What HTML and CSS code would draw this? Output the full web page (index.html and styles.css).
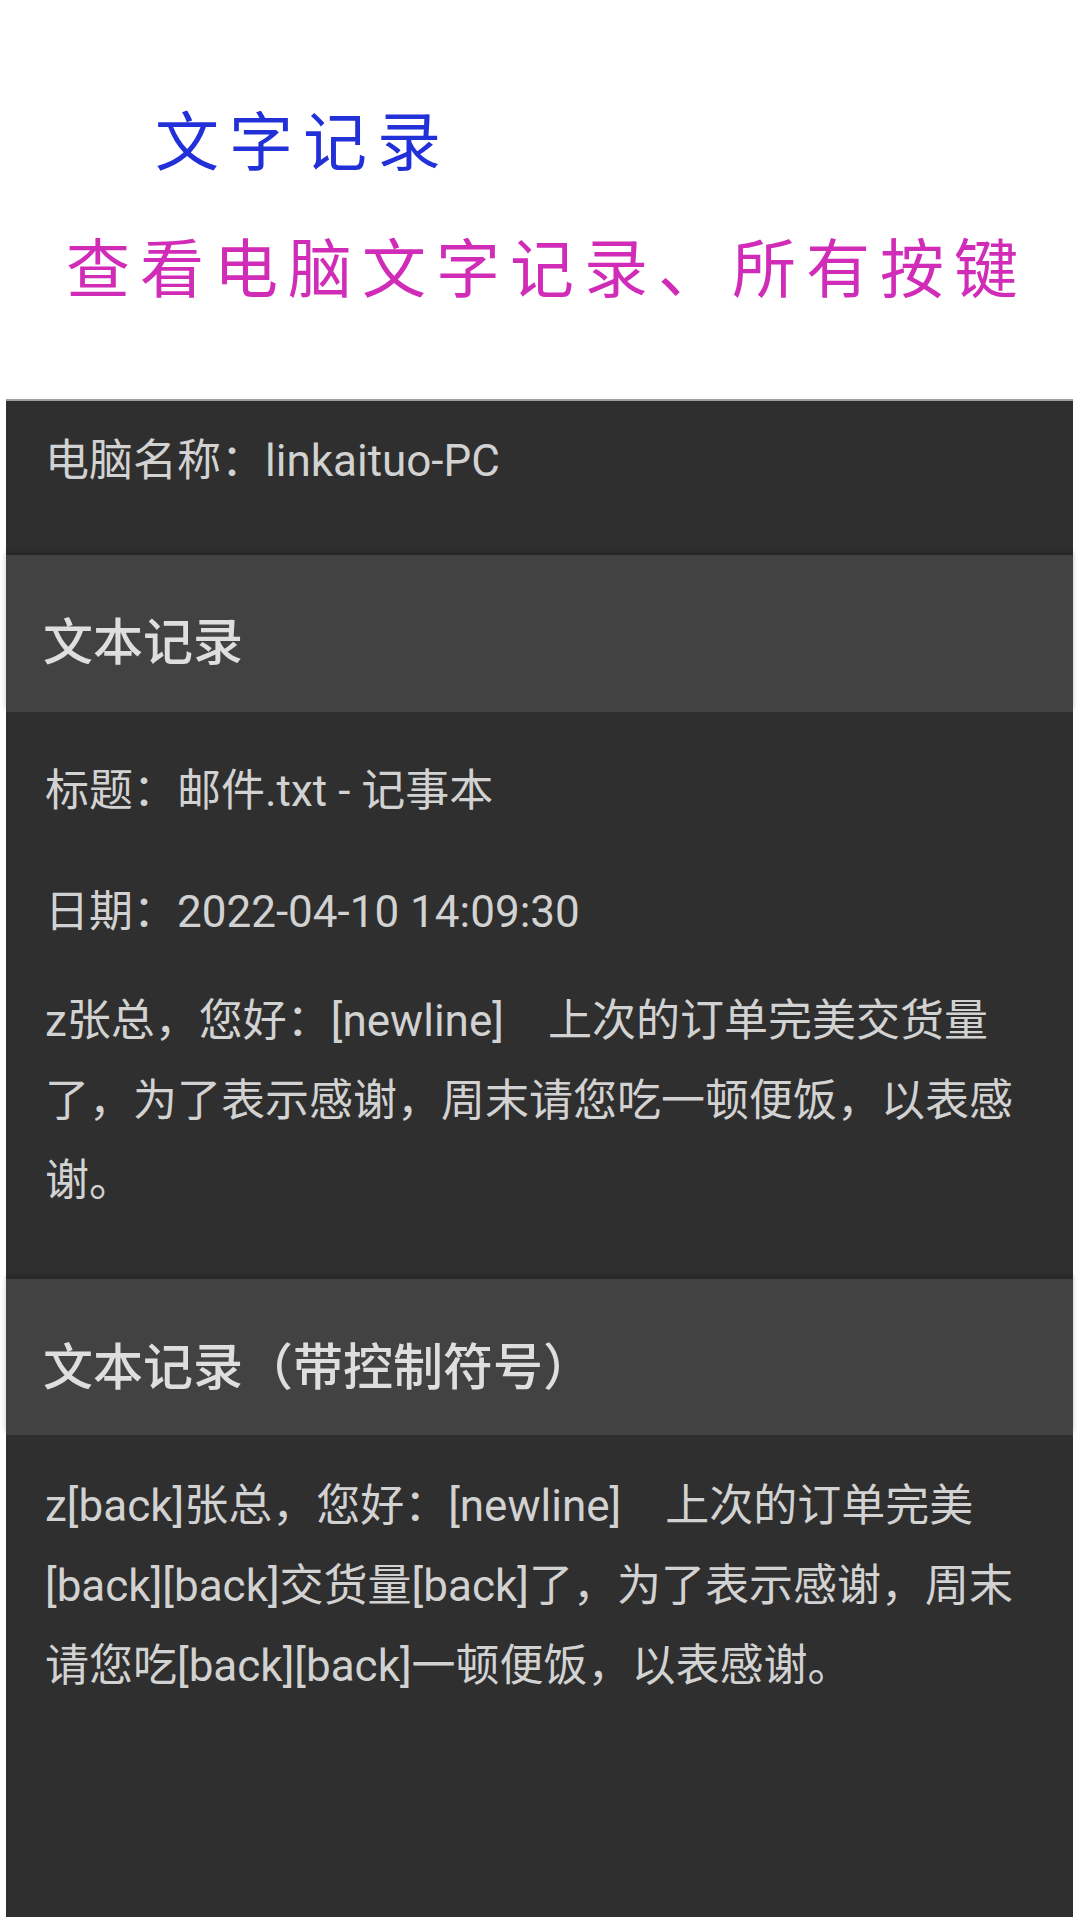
FILE: index.html
```html
<!DOCTYPE html>
<html lang="zh-CN">
<head>
<meta charset="utf-8">
<title>文字记录</title>
<link rel="stylesheet" href="styles.css">
</head>
<body>
<header class="hero">
  <h1 class="hero-title">文字记录</h1>
  <p class="hero-sub">查看电脑文字记录、所有按键</p>
</header>
<main class="panel">
  <div class="device">电脑名称：linkaituo-PC</div>
  <h2 class="section-head">文本记录</h2>
  <section class="section-body first">
    <p class="meta title">标题：邮件.txt - 记事本</p>
    <p class="meta date">日期：2022-04-10 14:09:30</p>
    <p class="text">z张总，您好：[newline]　上次的订单完美交货量了，为了表示感谢，周末请您吃一顿便饭，以表感谢。</p>
  </section>
  <h2 class="section-head second">文本记录（带控制符号）</h2>
  <section class="section-body last">
    <p class="text">z[back]张总，您好：[newline]　上次的订单完美[back][back]交货量[back]了，为了表示感谢，周末请您吃[back][back]一顿便饭，以表感谢。</p>
  </section>
</main>
</body>
</html>
```

FILE: styles.css
```css
html, body {
  margin: 0;
  padding: 0;
  background: #ffffff;
}
body {
  width: 1080px;
  height: 1920px;
  overflow: hidden;
  font-family: Roboto, "Noto Sans CJK SC", sans-serif;
}
.hero {
  height: 399px;
  box-sizing: border-box;
  padding: 97px 0 0 66px;
}
.hero-title {
  margin: 0 0 47px 89px;
  font-size: 64px;
  line-height: 80px;
  font-weight: 400;
  letter-spacing: 10px;
  color: #2230d8;
  font-family: "Noto Sans CJK SC", sans-serif;
}
.hero-sub {
  margin: 0;
  font-size: 64px;
  line-height: 80px;
  font-weight: 400;
  letter-spacing: 10px;
  color: #d02cb8;
  font-family: "Noto Sans CJK SC", sans-serif;
}
.panel {
  margin: 0 0 0 6px;
  width: 1067px;
  height: 1518px;
  box-sizing: border-box;
  background: #2f2f2f;
  border-top: 2px solid #9e9e9e;
  color: #d2d2d2;
  display: flex;
  flex-direction: column;
}
.device {
  height: 154px;
  box-sizing: border-box;
  padding: 30px 48px 0 39px;
  font-size: 44px;
  line-height: 60px;
}
.section-head {
  margin: 0;
  height: 157px;
  box-sizing: border-box;
  padding: 8px 48px 0 37px;
  display: flex;
  align-items: center;
  background: #424242;
  color: #dedede;
  font-size: 50px;
  font-weight: 500;
  box-shadow: 0 -3px 5px rgba(0, 0, 0, 0.22);
}
.section-head.second {
  height: 156px;
  padding-top: 12px;
}
.section-body {
  padding: 39px 48px 0 39px;
  font-size: 44px;
  line-height: 80px;
}
.section-body.first {
  height: 567px;
  box-sizing: border-box;
}
.section-body.last {
  flex: 1;
  padding-top: 31px;
}
.section-body p {
  margin: 0;
}
.meta.title {
  margin-bottom: 41px;
}
.meta.date {
  margin-bottom: 29px;
}
```
